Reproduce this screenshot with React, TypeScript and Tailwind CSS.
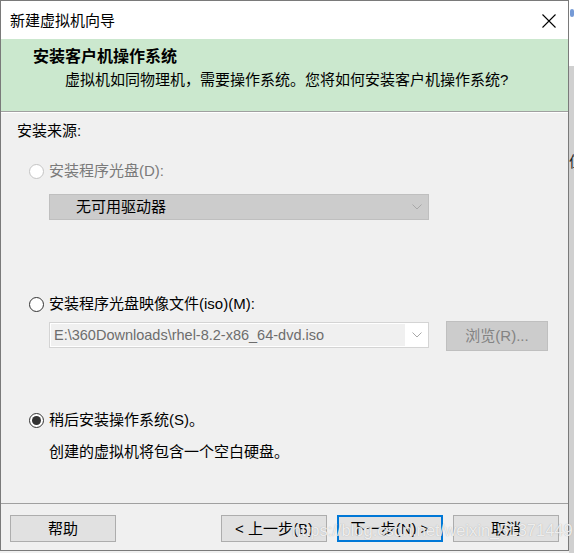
import React from "react";

const FONT = "font-['Liberation_Sans','Noto_Sans_CJK_SC',sans-serif]";

function Radio({ disabled, checked }: { disabled?: boolean; checked?: boolean }) {
  return (
    <span
      className={`flex h-[15px] w-[15px] shrink-0 items-center justify-center rounded-full border bg-white ${
        disabled ? "border-[#c4c4c4]" : "border-[#333333]"
      }`}
    >
      {checked && <span className="h-[9px] w-[9px] rounded-full bg-[#333333]" />}
    </span>
  );
}

function Chevron({ color }: { color: string }) {
  return (
    <svg width="10" height="6" viewBox="0 0 10 6" className="shrink-0">
      <path d="M0.5 0.5 L5 5 L9.5 0.5" fill="none" stroke={color} strokeWidth="1" />
    </svg>
  );
}

function Button({ children, focused }: { children: React.ReactNode; focused?: boolean }) {
  return (
    <div
      className={`flex h-[27px] w-[106px] items-center justify-center bg-[#e1e1e1] text-[15px] leading-none text-black ${
        focused ? "border-2 border-[#0078d7]" : "border border-[#adadad]"
      }`}
    >
      {children}
    </div>
  );
}

export default function App() {
  return (
    <div className={`relative flex h-[553px] w-[574px] overflow-hidden bg-[#f0f0f0] ${FONT}`}>
      {/* window */}
      <div className="flex h-[551px] w-[569px] shrink-0 flex-col border border-[#7a7a7a] bg-[#f0f0f0]">
        {/* title bar */}
        <div className="flex h-[38px] shrink-0 items-center justify-between bg-white pl-[9px] pr-[12px]">
          <span className="text-[15px] leading-none text-black">新建虚拟机向导</span>
          <svg width="14" height="14" viewBox="0 0 14 14" className="mt-[2px]">
            <path d="M0.5 0.5 L13.5 13.5 M13.5 0.5 L0.5 13.5" stroke="#000" strokeWidth="1.1" />
          </svg>
        </div>
        {/* green header */}
        <div className="flex h-[72px] shrink-0 flex-col bg-[#cbe8ce] pt-[8px]">
          <div className="pl-[32px] text-[16px] font-bold leading-[20px] text-black">安装客户机操作系统</div>
          <div className="mt-[3px] pl-[64px] text-[15px] leading-[20px] text-black">
            虚拟机如同物理机，需要操作系统。您将如何安装客户机操作系统?
          </div>
        </div>
        <div className="h-px shrink-0 bg-[#a0a0a0]" />
        <div className="h-px shrink-0 bg-white" />
        {/* body */}
        <div className="flex flex-1 flex-col pt-[8px] text-[15px] leading-[20px]">
          <div className="pl-[16px] text-black">安装来源:</div>

          <div className="mt-[20px] flex items-center gap-[5px] pl-[28px] text-[#7a7a7a]">
            <Radio disabled />
            <span>安装程序光盘(D):</span>
          </div>

          <div className="ml-[48px] mt-[13px] flex h-[26px] w-[380px] items-center justify-between border border-[#bfbfbf] bg-[#cccccc] pl-[26px] pr-[6px]">
            <span className="text-black">无可用驱动器</span>
            <Chevron color="#a8a8a8" />
          </div>

          <div className="mt-[74px] flex items-center gap-[5px] pl-[28px] text-black">
            <Radio />
            <span>安装程序光盘映像文件(iso)(M):</span>
          </div>

          <div className="mt-[7px] flex items-start pl-[48px]">
            <div className="mt-[1px] flex h-[26px] w-[380px] items-center border border-[#d4d4d4] bg-white p-[1px] pr-[6px]">
              <div className="flex h-full w-[354px] items-center bg-[#f0f0f0] pl-[3px] text-[14.5px] text-[#6d6d6d]">
                E:\360Downloads\rhel-8.2-x86_64-dvd.iso
              </div>
              <div className="flex flex-1 justify-end">
                <Chevron color="#a8a8a8" />
              </div>
            </div>
            <div className="ml-[17px] flex h-[30px] w-[102px] items-center justify-center border border-[#bfbfbf] bg-[#cccccc] text-[#838383]">
              浏览(R)...
            </div>
          </div>

          <div className="mt-[59px] flex items-center gap-[5px] pl-[28px] text-black">
            <Radio checked />
            <span>稍后安装操作系统(S)。</span>
          </div>

          <div className="mt-[12px] pl-[48px] text-black">创建的虚拟机将包含一个空白硬盘。</div>
        </div>
        {/* separator */}
        <div className="h-px shrink-0 bg-[#a0a0a0]" />
        {/* footer */}
        <div className="flex h-[46px] shrink-0 items-start pt-[11px]">
          <div className="ml-[9px]">
            <Button>帮助</Button>
          </div>
          <div className="ml-auto mr-[9px] flex gap-[10px]">
            <Button>&lt; 上一步(B)</Button>
            <Button focused>下一步(N) &gt;</Button>
            <Button>取消</Button>
          </div>
        </div>
      </div>
      {/* outside strip */}
      <div className="flex flex-1 flex-col">
        <div className="relative h-[66px] bg-white">
          <div className="absolute left-[1px] top-[9px] h-[8px] w-[4px] rounded-sm bg-[#3b6fc4] opacity-70" />
        </div>
        <div className="flex-1 bg-[#d0d0d0] pt-[88px] text-[15px] leading-none text-[#222]">
          <span>值</span>
        </div>
      </div>
      {/* watermark */}
      <div className="pointer-events-none absolute left-[292px] top-[519px] text-[16.5px] leading-[22px] text-white/80 [text-shadow:0_0_1px_rgba(140,140,140,0.8)]">
        https://blog.csdn.net/weixin_51371449
      </div>
    </div>
  );
}
